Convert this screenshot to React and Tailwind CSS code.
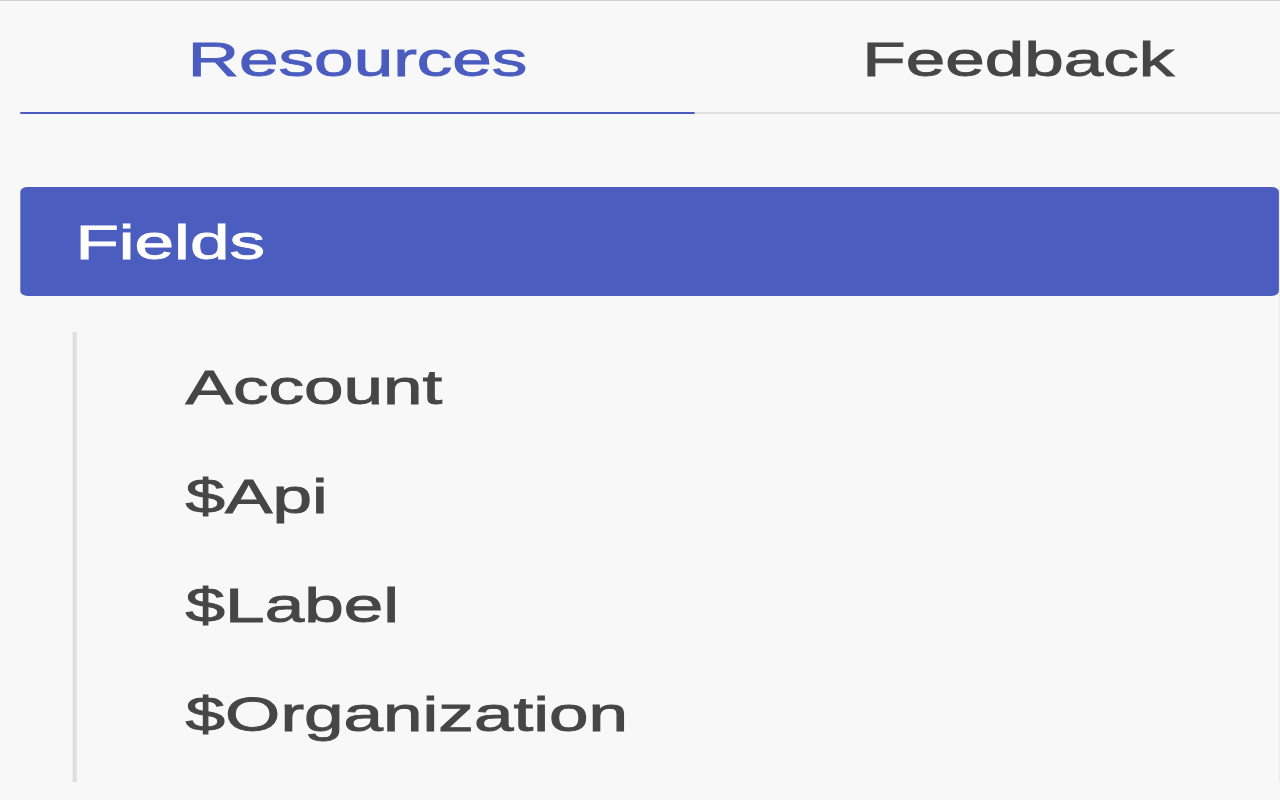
import { useState } from "react";

const tabs = ["Resources", "Feedback"];
const fieldItems = ["Account", "$Api", "$Label", "$Organization"];

const App = () => {
  const [activeTab, setActiveTab] = useState("Resources");

  return (
    <div className="h-screen w-full overflow-hidden bg-[#f8f8f8] border-t border-[#d2d2d2] font-['Liberation_Sans',Arial,sans-serif] text-[49px] text-[#464646] [-webkit-text-stroke:0.9px_currentColor]">
      {/* the whole panel is drawn wide, like the shot */}
      <div className="w-[883px] origin-top-left scale-x-[1.45]">
        <div className="ml-[14px] flex border-b-2 border-[#e0e0e0]">
          {tabs.map((tab) => (
            <button
              key={tab}
              onClick={() => setActiveTab(tab)}
              className={`shrink-0 px-[115.5px] pt-[30px] pb-[25px] leading-[56px] whitespace-nowrap border-b-2 -mb-[2px] ${
                activeTab === tab
                  ? "border-[#4a5cc0] text-[#4a5cc0]"
                  : "border-transparent text-[#464646]"
              }`}
            >
              {tab}
            </button>
          ))}
        </div>

        <section className="ml-[14px] mt-[73px] border-r-[1.5px] border-[#ececec]">
          <div className="flex h-[109px] items-center rounded-[5px] bg-[#4b5dbf] pl-[38px] leading-[56px] text-white">
            Fields
          </div>

          <ul className="ml-[36px] mt-[36px] border-l-[3px] border-[#e0e0e0] pb-[14px]">
            {fieldItems.map((item) => (
              <li
                key={item}
                className="flex h-[109px] items-center pl-[75px] leading-[56px]"
              >
                {item}
              </li>
            ))}
          </ul>
        </section>
      </div>
    </div>
  );
};

export default App;
